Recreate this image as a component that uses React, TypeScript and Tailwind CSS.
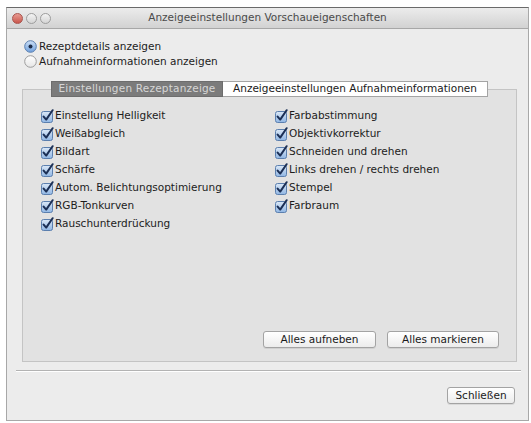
import React from "react";

const leftItems = [
  "Einstellung Helligkeit",
  "Weißabgleich",
  "Bildart",
  "Schärfe",
  "Autom. Belichtungsoptimierung",
  "RGB-Tonkurven",
  "Rauschunterdrückung",
];

const rightItems = [
  "Farbabstimmung",
  "Objektivkorrektur",
  "Schneiden und drehen",
  "Links drehen / rechts drehen",
  "Stempel",
  "Farbraum",
];

function CheckBox() {
  return (
    <svg width="14" height="14" viewBox="0 0 14 14" className="shrink-0">
      <defs>
        <linearGradient id="cb" x1="0" y1="0" x2="0" y2="1">
          <stop offset="0" stopColor="#dbe8f7" />
          <stop offset="1" stopColor="#8fb5e3" />
        </linearGradient>
      </defs>
      <rect x="1.5" y="2.5" width="11" height="11" rx="2" fill="url(#cb)" stroke="#5b7fae" />
      <path d="M3.6 7.6 L6.2 10.6 L12.6 1.2" fill="none" stroke="#1b2f55" strokeWidth="2" strokeLinecap="round" strokeLinejoin="round" />
    </svg>
  );
}

function Radio({ checked }: { checked?: boolean }) {
  return (
    <svg width="13" height="13" viewBox="0 0 13 13" className="shrink-0">
      <defs>
        <linearGradient id="rb" x1="0" y1="0" x2="0" y2="1">
          <stop offset="0" stopColor="#cde0f6" />
          <stop offset="1" stopColor="#6f9fdc" />
        </linearGradient>
        <linearGradient id="rw" x1="0" y1="0" x2="0" y2="1">
          <stop offset="0" stopColor="#ffffff" />
          <stop offset="1" stopColor="#e6e6e6" />
        </linearGradient>
      </defs>
      <circle
        cx="6.5"
        cy="6.5"
        r="5.8"
        fill={checked ? "url(#rb)" : "url(#rw)"}
        stroke={checked ? "#5a7fb0" : "#9c9c9c"}
      />
      {checked && <circle cx="6.5" cy="6.5" r="2" fill="#1c2c48" />}
    </svg>
  );
}

function CheckRow({ label }: { label: string }) {
  return (
    <div className="flex h-[18px] items-center gap-[1px]">
      <CheckBox />
      <span>{label}</span>
    </div>
  );
}

function MacButton({ label, width }: { label: string; width: string }) {
  return (
    <button
      className={`${width} h-[17px] rounded-[3px] border border-[#a3a3a3] bg-gradient-to-b from-white to-[#ececec] text-[10.5px] leading-none text-[#1a1a1a] shadow-[0_1px_0_rgba(0,0,0,0.08)]`}
    >
      {label}
    </button>
  );
}

export default function App() {
  return (
    <div className="h-[423px] w-[531px] overflow-hidden bg-white pl-[6px] pt-[7px] font-['DejaVu_Sans',sans-serif] text-[10.5px] text-[#1c1c1c]">
      <div className="flex h-[414px] w-[523px] flex-col border border-[#a8a8a8] border-t-[#6a6a6a] bg-[#ececec]">
        {/* title bar */}
        <div className="grid h-[21px] shrink-0 grid-cols-[60px_1fr_60px] items-center border-b border-[#a7a7a7] bg-gradient-to-b from-[#ececec] to-[#d2d2d2]">
          <div className="flex gap-[3px] pl-[5px]">
            <span className="h-[11px] w-[11px] rounded-full border border-[#a9544d] bg-gradient-to-b from-[#e79a92] to-[#c9564c]" />
            <span className="h-[11px] w-[11px] rounded-full border border-[#9d9d9d] bg-gradient-to-b from-[#f3f3f3] to-[#d5d5d5]" />
            <span className="h-[11px] w-[11px] rounded-full border border-[#9d9d9d] bg-gradient-to-b from-[#f3f3f3] to-[#d5d5d5]" />
          </div>
          <div className="text-center text-[10.5px] text-[#4a4a4a]">
            Anzeigeeinstellungen Vorschaueigenschaften
          </div>
          <div />
        </div>

        {/* radios */}
        <div className="flex flex-col pl-[17px] pt-[10px]">
          <label className="flex h-[15px] items-center gap-[2px]">
            <Radio checked />
            <span>Rezeptdetails anzeigen</span>
          </label>
          <label className="flex h-[15px] items-center gap-[2px]">
            <Radio />
            <span>Aufnahmeinformationen anzeigen</span>
          </label>
        </div>

        {/* tabbed group */}
        <div className="ml-[15px] mt-[12px] flex w-[495px] flex-col">
          <div className="relative z-10 flex h-[16px] justify-center">
            <div className="flex w-[172px] items-center justify-center border border-[#6d6d6d] bg-[#7b7b7b] tracking-[0.2px] text-[#d6d6d6]">
              Einstellungen Rezeptanzeige
            </div>
            <div className="flex w-[265px] items-center justify-center border border-l-0 border-[#a4a4a4] bg-white text-[#1a1a1a]">
              Anzeigeeinstellungen Aufnahmeinformationen
            </div>
          </div>
          <div className="-mt-[8px] flex h-[273px] flex-col border border-[#c4c4c4] bg-[#e2e2e2] pl-[17px] pr-[17px] pt-[17px] pb-[13px]">
            <div className="flex">
              <div className="flex w-[234px] flex-col">
                {leftItems.map((item) => (
                  <CheckRow key={item} label={item} />
                ))}
              </div>
              <div className="flex flex-col">
                {rightItems.map((item) => (
                  <CheckRow key={item} label={item} />
                ))}
              </div>
            </div>
            <div className="mt-auto flex justify-end gap-[11px]">
              <MacButton label="Alles aufneben" width="w-[113px]" />
              <MacButton label="Alles markieren" width="w-[112px]" />
            </div>
          </div>
        </div>

        {/* separator */}
        <div className="ml-[9px] mr-[7px] mt-[8px] h-[2px] border-t border-b border-t-[#b3b3b3] border-b-white" />

        <div className="mt-[15px] flex justify-end pr-[13px]">
          <MacButton label="Schließen" width="w-[68px]" />
        </div>
      </div>
    </div>
  );
}
